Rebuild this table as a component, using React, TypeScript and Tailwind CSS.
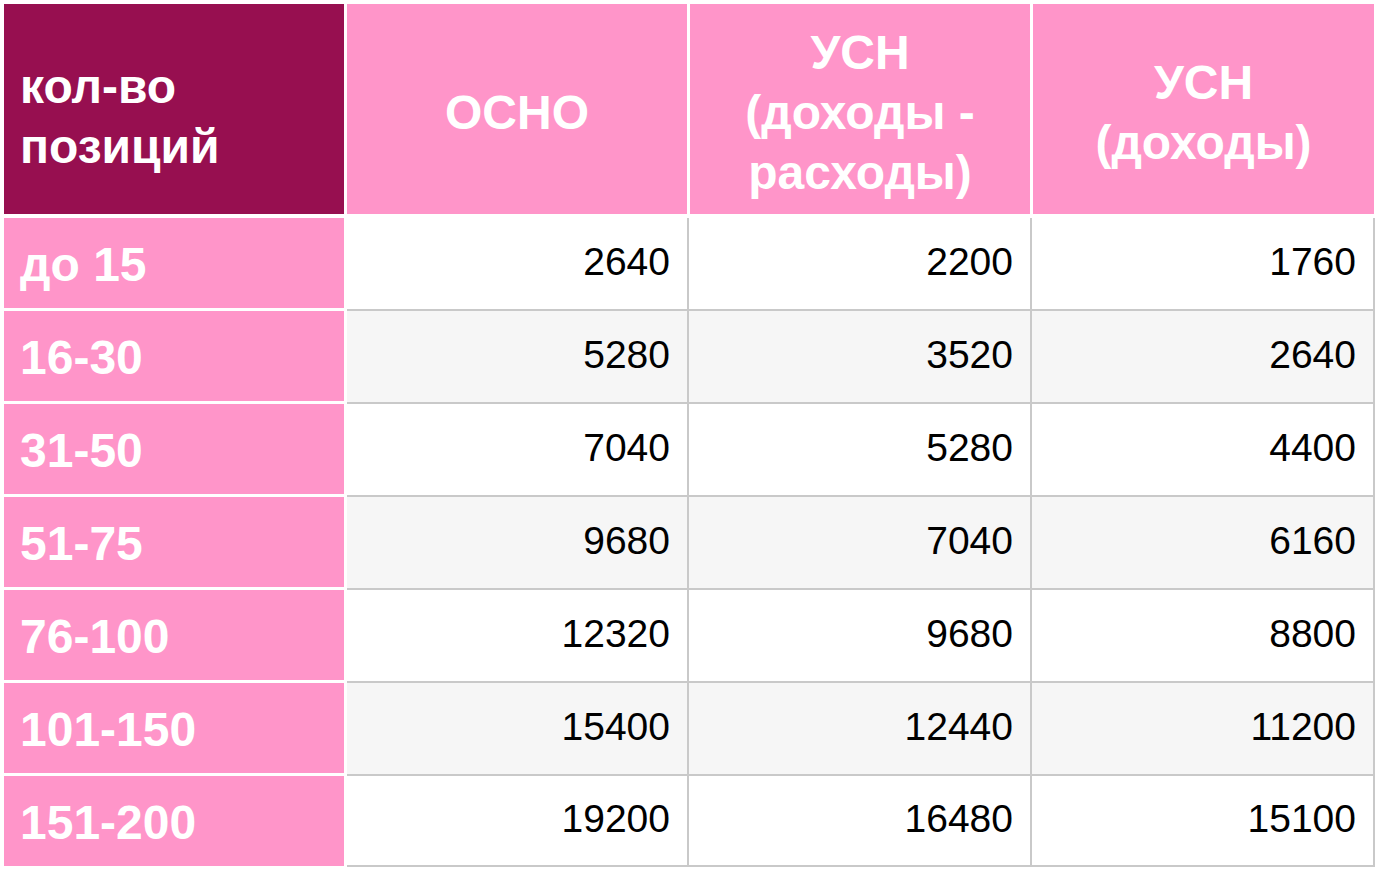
const rows = [
  { label: 'до 15', values: [2640, 2200, 1760] },
  { label: '16-30', values: [5280, 3520, 2640] },
  { label: '31-50', values: [7040, 5280, 4400] },
  { label: '51-75', values: [9680, 7040, 6160] },
  { label: '76-100', values: [12320, 9680, 8800] },
  { label: '101-150', values: [15400, 12440, 11200] },
  { label: '151-200', values: [19200, 16480, 15100] },
]

const widths = ['w-[342px]', 'w-[343px]', 'w-[343px]']

export default function App() {
  return (
    <div
      className="min-h-screen bg-white pt-[4px] pl-[4px]"
      style={{ fontFamily: '"Liberation Sans", Arial, sans-serif' }}
    >
      {/* Header row */}
      <div className="flex h-[210px] gap-[3px] text-[48px] font-bold leading-[60px] text-white">
        <div className="flex w-[340px] items-center bg-[#970f50] pl-[16px] pt-[16px]">
          <div>
            кол-во
            <br />
            позиций
          </div>
        </div>
        <div className="flex w-[340px] items-center justify-center bg-[#ff95c9] pt-[8px] text-center">
          ОСНО
        </div>
        <div className="flex w-[340px] items-center justify-center bg-[#ff95c9] pt-[8px] text-center">
          <div>
            УСН
            <br />
            (доходы -
            <br />
            расходы)
          </div>
        </div>
        <div className="flex w-[341px] items-center justify-center bg-[#ff95c9] pt-[8px] text-center">
          <div>
            УСН
            <br />
            (доходы)
          </div>
        </div>
      </div>

      {/* Data rows */}
      <div className="mt-[4px] flex flex-col">
        {rows.map((row, i) => (
          <div key={row.label} className="flex h-[93px] last:h-[91px]">
            <div className="flex w-[340px] items-start">
              <div className="flex h-[90px] w-full items-center bg-[#ff95c9] pl-[16px] pt-[4px] text-[48px] font-bold text-white">
                {row.label}
              </div>
            </div>
            <div className="w-[3px]" />
            {row.values.map((v, j) => (
              <div
                key={j}
                className={`${widths[j]} flex items-center justify-end border-r-2 border-b-2 border-[#c9c9c9] pr-[17px] pb-[2px] text-[39px] text-black ${
                  i % 2 === 1 ? 'bg-[#f6f6f6]' : 'bg-white'
                }`}
              >
                {v}
              </div>
            ))}
          </div>
        ))}
      </div>
    </div>
  )
}
